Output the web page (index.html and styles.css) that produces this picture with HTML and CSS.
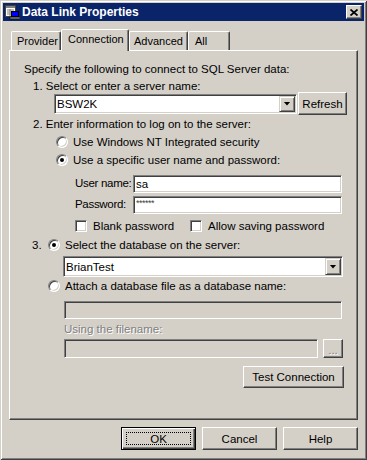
FILE: index.html
```html
<!DOCTYPE html>
<html lang="en">
<head>
    <meta charset="UTF-8">
    <meta name="viewport" content="width=device-width, initial-scale=1.0">
    <title>Data Link Properties</title>
    <link rel="stylesheet" href="styles.css">
</head>
<body>
<div class="window">
    <div class="titlebar">
        <svg class="app-icon" viewBox="0 0 16 16" width="16" height="16">
            <rect x="1.5" y="1.5" width="10" height="11" fill="#fff" stroke="#404040"/>
            <rect x="2" y="2" width="9" height="2" fill="#808080"/>
            <path d="M3 6h7M3 8h7M3 10h4M6 5v7" stroke="#808080" stroke-width="1"/>
            <rect x="7.5" y="7.5" width="7" height="5" fill="#0000ff" stroke="#000"/>
            <rect x="6" y="13" width="10" height="2" fill="#808080" stroke="#000" stroke-width="0.5"/>
        </svg>
        <span class="title">Data Link Properties</span>
        <span class="close-btn">
            <svg viewBox="0 0 8 7" width="8" height="7">
                <path d="M0.5 0.5L7.5 6.5M7.5 0.5L0.5 6.5" stroke="#000" stroke-width="1.7"/>
            </svg>
        </span>
    </div>

    <div class="dialog">
        <div class="tabs">
            <div class="tab tab-provider">Provider</div>
            <div class="tab tab-connection active">Connection</div>
            <div class="tab tab-advanced">Advanced</div>
            <div class="tab tab-all">All</div>
        </div>

        <div class="panel">
            <div class="line">Specify the following to connect to SQL Server data:</div>
            <div class="line step">1. Select or enter a server name:</div>
            <div class="server-row">
                <div class="combo server-combo"><span class="combo-value">BSW2K</span><span class="drop-btn"></span></div>
                <div class="btn refresh-btn">Refresh</div>
            </div>

            <div class="line step step-two">2. Enter information to log on to the server:</div>
            <div class="option auth-option"><span class="radio"></span>Use Windows NT Integrated security</div>
            <div class="option auth-option"><span class="radio checked"></span>Use a specific user name and password:</div>
            <div class="cred-row user-row">
                <span class="cred-label">User name:</span>
                <div class="field cred-field">sa</div>
            </div>
            <div class="cred-row pass-row">
                <span class="cred-label">Password:</span>
                <div class="field cred-field"><span class="mask">******</span></div>
            </div>
            <div class="check-row">
                <span class="check-item blank-item"><span class="checkbox"></span>Blank password</span>
                <span class="check-item"><span class="checkbox"></span>Allow saving password</span>
            </div>

            <div class="option db-option"><span class="step-num">3.</span><span class="radio checked"></span>Select the database on the server:</div>
            <div class="combo db-combo"><span class="combo-value">BrianTest</span><span class="drop-btn"></span></div>
            <div class="option attach-option"><span class="radio"></span>Attach a database file as a database name:</div>
            <div class="field disabled attach-field"></div>
            <div class="line disabled-text using-label">Using the filename:</div>
            <div class="file-row">
                <div class="field disabled file-field"></div>
                <div class="btn browse-btn"><span class="disabled-text">...</span></div>
            </div>
            <div class="test-row">
                <div class="btn test-btn">Test Connection</div>
            </div>
        </div>

        <div class="buttons">
            <div class="btn default-btn">OK</div>
            <div class="btn">Cancel</div>
            <div class="btn">Help</div>
        </div>
    </div>
</div>
</body>
</html>
```

FILE: styles.css
```css
body {
    margin: 0;
    background: #d4d0c8;
    font-family: "Liberation Sans", Arial, sans-serif;
    font-size: 11.5px;
    line-height: 14px;
    color: #000;
}
.window {
    width: 367px;
    height: 460px;
    box-sizing: border-box;
    padding: 3px;
    background: #d4d0c8;
    box-shadow: inset 1px 1px #d4d0c8, inset -1px -1px #404040, inset 2px 2px #fff, inset -2px -2px #808080;
}

/* title bar */
.titlebar {
    height: 18px;
    background: #0a246a;
    display: flex;
    align-items: center;
    padding: 0 2px 0 1px;
}
.app-icon {
    flex: none;
}
.title {
    margin-left: 2px;
    color: #fff;
    font-weight: bold;
    font-size: 12px;
}
.close-btn {
    margin-left: auto;
    width: 16px;
    height: 14px;
    box-sizing: border-box;
    background: #d4d0c8;
    border: 1px solid;
    border-color: #fff #404040 #404040 #fff;
    box-shadow: inset -1px -1px #808080;
    display: flex;
    align-items: center;
    justify-content: center;
}

/* tabs */
.dialog {
    padding: 8px 6px 0 6px;
}
.tabs {
    display: flex;
    align-items: flex-end;
    height: 21px;
    padding-left: 2px;
}
.tab {
    height: 19px;
    box-sizing: border-box;
    padding: 2px 0 0 5px;
    border-top: 1px solid #fff;
    border-left: 1px solid #fff;
    border-right: 1px solid #404040;
    box-shadow: inset -1px 0 #808080;
    border-radius: 2px 2px 0 0;
    background: #d4d0c8;
    font-size: 11px;
    white-space: nowrap;
    overflow: hidden;
}
.tab-provider { width: 50px; }
.tab-connection { width: 68px; padding-left: 6px; }
.tab-advanced { width: 59px; padding-left: 4px; }
.tab-all { width: 42px; padding-left: 6px; }
.tab.active {
    height: 22px;
    margin-bottom: -1px;
    position: relative;
    z-index: 1;
}

/* panel */
.panel {
    height: 370px;
    box-sizing: border-box;
    border: 1px solid;
    border-color: #fff #404040 #404040 #fff;
    box-shadow: inset -1px -1px #808080;
    padding: 11px 0 0 14px;
}
.line {
    height: 14px;
    white-space: nowrap;
}
.step {
    margin: 3px 0 0 9px;
}
.step-two {
    margin-top: 2px;
}
.server-row {
    display: flex;
    align-items: center;
    height: 23px;
    margin: -1px 0 0 30px;
}
.server-combo {
    width: 243px;
    height: 20px;
}
.refresh-btn {
    width: 49px;
    height: 23px;
    margin-left: 1px;
}

/* controls */
.combo {
    display: flex;
    box-sizing: border-box;
    padding: 1px;
    background: #fff;
    border: 1px solid;
    border-color: #808080 #fff #fff #808080;
    box-shadow: inset 1px 1px #404040, inset -1px -1px #d4d0c8;
}
.combo-value {
    flex: 1;
    align-self: center;
    padding-left: 1px;
}
.drop-btn {
    width: 16px;
    box-sizing: border-box;
    background: #d4d0c8;
    border: 1px solid;
    border-color: #d4d0c8 #404040 #404040 #d4d0c8;
    box-shadow: inset 1px 1px #fff, inset -1px -1px #808080;
    display: flex;
    align-items: center;
    justify-content: center;
}
.drop-btn::after {
    content: "";
    width: 7px;
    height: 4px;
    background: #000;
    clip-path: polygon(0 0, 100% 0, 50% 100%);
}
.field {
    display: flex;
    align-items: center;
    box-sizing: border-box;
    padding: 0 0 1px 2px;
    background: #fff;
    border: 1px solid;
    border-color: #808080 #fff #fff #808080;
    box-shadow: inset 1px 1px #404040, inset -1px -1px #d4d0c8;
}
.field.disabled {
    background: #d4d0c8;
}
.mask {
    font-size: 9px;
    color: #404040;
    letter-spacing: -0.5px;
    padding-bottom: 3px;
}
.btn {
    display: flex;
    align-items: center;
    justify-content: center;
    box-sizing: border-box;
    background: #d4d0c8;
    border: 1px solid;
    border-color: #fff #404040 #404040 #fff;
    box-shadow: inset -1px -1px #808080;
    white-space: nowrap;
}
.radio {
    flex: none;
    width: 12px;
    height: 12px;
    box-sizing: border-box;
    border-radius: 50%;
    background: #fff;
    border: 1px solid;
    border-color: #808080 #fff #fff #808080;
    box-shadow: inset 1px 1px #404040, inset -1px -1px #d4d0c8;
    margin-right: 5px;
    position: relative;
}
.radio.checked::after {
    content: "";
    position: absolute;
    left: 3px;
    top: 3px;
    width: 4px;
    height: 4px;
    border-radius: 50%;
    background: #000;
}
.checkbox {
    flex: none;
    width: 12px;
    height: 12px;
    box-sizing: border-box;
    background: #fff;
    border: 1px solid;
    border-color: #808080 #fff #fff #808080;
    box-shadow: inset 1px 1px #404040, inset -1px -1px #d4d0c8;
    margin-right: 6px;
}
.disabled-text {
    color: #808080;
    text-shadow: 1px 1px 0 #fff;
}

/* options */
.option {
    display: flex;
    align-items: center;
    height: 14px;
    white-space: nowrap;
}
.auth-option {
    margin: 4px 0 0 32px;
}
.cred-row {
    display: flex;
    height: 18px;
    margin: 3px 0 0 51px;
}
.user-row {
    margin-top: 8px;
}
.cred-label {
    flex: none;
    width: 58px;
    line-height: 14px;
    padding-top: 1px;
    white-space: nowrap;
    letter-spacing: -0.3px;
}
.cred-field {
    width: 209px;
    height: 18px;
}
.check-row {
    display: flex;
    height: 14px;
    margin: 5px 0 0 51px;
}
.check-item {
    display: flex;
    align-items: center;
    white-space: nowrap;
}
.blank-item {
    width: 115px;
}
.db-option {
    margin: 5px 0 0 8px;
}
.step-num {
    width: 16px;
}
.db-combo {
    width: 280px;
    height: 21px;
    margin: 4px 0 0 39px;
}
.attach-option {
    margin: 2px 0 0 24px;
}
.attach-field {
    width: 278px;
    height: 18px;
    margin: 8px 0 0 40px;
}
.using-label {
    margin: 3px 0 0 40px;
}
.file-row {
    display: flex;
    gap: 5px;
    height: 19px;
    margin: 3px 0 0 40px;
}
.file-field {
    width: 254px;
}
.browse-btn {
    width: 20px;
    padding-top: 3px;
}
.test-row {
    margin: 8px 0 0 219px;
}
.test-btn {
    width: 101px;
    height: 22px;
}

/* dialog buttons */
.buttons {
    display: flex;
    justify-content: flex-end;
    gap: 6px;
    margin-top: 7px;
}
.buttons .btn {
    width: 75px;
    height: 23px;
}
.buttons .default-btn {
    position: relative;
    border-color: #000;
    box-shadow: inset 1px 1px #fff, inset -1px -1px #404040, inset -2px -2px #808080;
}
.default-btn::after {
    content: "";
    position: absolute;
    left: 4px;
    top: 4px;
    right: 4px;
    bottom: 4px;
    border: 1px dotted #000;
}
```
